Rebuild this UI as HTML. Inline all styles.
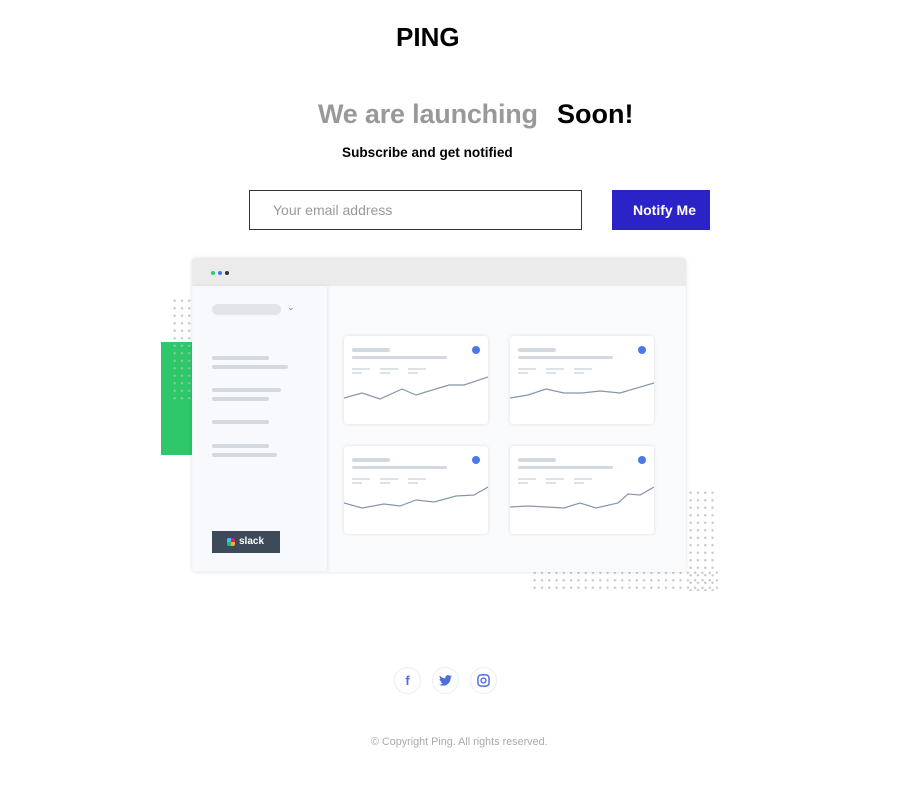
<!DOCTYPE html>
<html><head><style>
*{margin:0;padding:0;box-sizing:border-box}
body{width:902px;height:788px;background:#fff;font-family:"Liberation Sans",sans-serif;position:relative;overflow:hidden}
.a{position:absolute}
.dots{background-image:radial-gradient(circle,#c8c8c8 1px,transparent 1.4px);background-size:7.3px 7.5px}
.bar{position:absolute;height:4px;border-radius:2px;background:#d3d9e0}
.sb{position:absolute;height:2px;background:#dde2e8}
.card{position:absolute;width:144px;height:88px;background:#fff;border-radius:3px;box-shadow:0 0 3px rgba(0,0,0,.12)}
.chk{position:absolute;right:8px;top:10px;width:8px;height:8px;border-radius:50%;background:#4b79e8}
.soc{position:absolute;top:667px;width:27px;height:27px;border-radius:50%;border:1px solid #e8ecf5;color:#4b6fe0;font-size:13px;font-weight:bold;text-align:center;line-height:25px}
</style></head><body>
<div class="a" style="left:396px;top:22px;font-size:26px;font-weight:bold">PING</div>
<div class="a" style="left:318px;top:99px;font-size:27px;font-weight:bold;color:#999;letter-spacing:-0.2px">We are launching</div>
<div class="a" style="left:557px;top:99px;font-size:27px;font-weight:bold;color:#000">Soon!</div>
<div class="a" style="left:342px;top:145px;font-size:13.6px;font-weight:bold">Subscribe and get notified</div>
<div class="a" style="left:249px;top:190px;width:333px;height:40px;border:1px solid #333;"></div>
<div class="a" style="left:273px;top:202px;font-size:14px;color:#999">Your email address</div>
<div class="a" style="left:612px;top:190px;width:98px;height:40px;background:#2b22c8;color:#fff;font-size:14px;font-weight:bold;line-height:40px;padding-left:21px">Notify Me</div>

<div class="a dots" style="left:171px;top:297px;width:22px;height:106px"></div>
<div class="a" style="left:161px;top:342px;width:32px;height:113px;background:#2ec76a"></div>
<div class="a dots" style="left:171px;top:342px;width:22px;height:61px;opacity:.6"></div>
<div class="a dots" style="left:687px;top:489px;width:31px;height:102px"></div>
<div class="a dots" style="left:531px;top:569px;width:187px;height:22px"></div>

<div class="a" style="left:192px;top:258px;width:494px;height:314px;background:#f9fafc;border-radius:4px;box-shadow:0 0 4px rgba(0,0,0,.12)"></div>
<div class="a" style="left:192px;top:258px;width:494px;height:28px;background:#ebebeb;border-radius:4px 4px 0 0"></div>
<div class="a" style="left:211px;top:271px;width:4px;height:4px;border-radius:50%;background:#2ec76a"></div>
<div class="a" style="left:218px;top:271px;width:4px;height:4px;border-radius:50%;background:#4b79e8"></div>
<div class="a" style="left:225px;top:271px;width:4px;height:4px;border-radius:50%;background:#333"></div>
<div class="a" style="left:193px;top:286px;width:134px;height:285px;background:#f8f9fc;box-shadow:1px 0 3px rgba(0,0,0,.08)"></div>
<div class="a" style="left:212px;top:304px;width:69px;height:11px;border-radius:6px;background:#e1e4e8"></div>
<div class="a" style="left:287px;top:302px;font-size:9px;color:#4b79e8">⌄</div>
<div class="bar" style="left:212px;top:356px;width:57px"></div>
<div class="bar" style="left:212px;top:365px;width:76px"></div>
<div class="bar" style="left:212px;top:388px;width:69px"></div>
<div class="bar" style="left:212px;top:397px;width:57px"></div>
<div class="bar" style="left:212px;top:420px;width:57px"></div>
<div class="bar" style="left:212px;top:444px;width:57px"></div>
<div class="bar" style="left:212px;top:453px;width:65px"></div>
<div class="a" style="left:212px;top:531px;width:68px;height:22px;background:#3d4a5a;color:#fff;font-size:10px;font-weight:bold;line-height:22px;padding-left:27px">slack</div>
<div class="a" style="left:227px;top:538px;width:8px;height:8px;background:conic-gradient(#e01e5a 0 25%,#ecb22e 0 50%,#2eb67d 0 75%,#36c5f0 0);border-radius:2px"></div>

<div class="card" style="left:344px;top:336px"><div class="bar" style="left:8px;top:12px;width:38px"></div><div class="bar" style="left:8px;top:20px;width:95px;height:3px"></div><div class="chk"></div>
<div class="sb" style="left:8px;top:32px;width:18px"></div><div class="sb" style="left:36px;top:32px;width:18px"></div><div class="sb" style="left:64px;top:32px;width:18px"></div>
<div class="sb" style="left:8px;top:36px;width:10px"></div><div class="sb" style="left:36px;top:36px;width:10px"></div><div class="sb" style="left:64px;top:36px;width:10px"></div>
<svg class="a" style="left:0;top:40px" width="144" height="30"><polyline fill="none" stroke="#8796a8" stroke-width="1.2" points="0,22 18,17 36,23 58,13 72,19 105,9 120,9 144,1"/></svg></div>
<div class="card" style="left:510px;top:336px"><div class="bar" style="left:8px;top:12px;width:38px"></div><div class="bar" style="left:8px;top:20px;width:95px;height:3px"></div><div class="chk"></div>
<div class="sb" style="left:8px;top:32px;width:18px"></div><div class="sb" style="left:36px;top:32px;width:18px"></div><div class="sb" style="left:64px;top:32px;width:18px"></div>
<div class="sb" style="left:8px;top:36px;width:10px"></div><div class="sb" style="left:36px;top:36px;width:10px"></div><div class="sb" style="left:64px;top:36px;width:10px"></div>
<svg class="a" style="left:0;top:40px" width="144" height="30"><polyline fill="none" stroke="#8796a8" stroke-width="1.2" points="0,22 18,19 36,13 54,17 72,17 90,15 110,17 144,7"/></svg></div>
<div class="card" style="left:344px;top:446px"><div class="bar" style="left:8px;top:12px;width:38px"></div><div class="bar" style="left:8px;top:20px;width:95px;height:3px"></div><div class="chk"></div>
<div class="sb" style="left:8px;top:32px;width:18px"></div><div class="sb" style="left:36px;top:32px;width:18px"></div><div class="sb" style="left:64px;top:32px;width:18px"></div>
<div class="sb" style="left:8px;top:36px;width:10px"></div><div class="sb" style="left:36px;top:36px;width:10px"></div><div class="sb" style="left:64px;top:36px;width:10px"></div>
<svg class="a" style="left:0;top:40px" width="144" height="30"><polyline fill="none" stroke="#8796a8" stroke-width="1.2" points="0,17 18,22 40,18 56,20 72,14 90,16 112,10 130,9 144,1"/></svg></div>
<div class="card" style="left:510px;top:446px"><div class="bar" style="left:8px;top:12px;width:38px"></div><div class="bar" style="left:8px;top:20px;width:95px;height:3px"></div><div class="chk"></div>
<div class="sb" style="left:8px;top:32px;width:18px"></div><div class="sb" style="left:36px;top:32px;width:18px"></div><div class="sb" style="left:64px;top:32px;width:18px"></div>
<div class="sb" style="left:8px;top:36px;width:10px"></div><div class="sb" style="left:36px;top:36px;width:10px"></div><div class="sb" style="left:64px;top:36px;width:10px"></div>
<svg class="a" style="left:0;top:40px" width="144" height="30"><polyline fill="none" stroke="#8796a8" stroke-width="1.2" points="0,21 18,20 54,22 70,17 86,22 108,17 118,8 130,9 144,1"/></svg></div>

<div class="soc" style="left:394px">f</div>
<div class="soc" style="left:432px">
<svg width="13" height="11" viewBox="0 0 24 20" style="margin-top:7px"><path fill="#4b6fe0" d="M24 2.4a10 10 0 0 1-2.8.8A5 5 0 0 0 23.3.4a10 10 0 0 1-3.1 1.2A4.9 4.9 0 0 0 11.8 6 14 14 0 0 1 1.7.9a4.9 4.9 0 0 0 1.5 6.6A4.9 4.9 0 0 1 1 6.9 4.9 4.9 0 0 0 4.9 11.8a5 5 0 0 1-2.2.1 4.9 4.9 0 0 0 4.6 3.4A9.9 9.9 0 0 1 0 17.3 14 14 0 0 0 7.5 19.5c9 0 14-7.5 14-14v-.6A10 10 0 0 0 24 2.4z"/></svg></div>
<div class="soc" style="left:470px">
<svg width="13" height="13" viewBox="0 0 14 14" style="margin-top:6px"><rect x="1" y="1" width="12" height="12" rx="3.5" fill="none" stroke="#4b6fe0" stroke-width="1.6"/><circle cx="7" cy="7" r="2.6" fill="none" stroke="#4b6fe0" stroke-width="1.5"/></svg></div>
<div class="a" style="left:371px;top:736px;font-size:10.8px;color:#aaa">© Copyright Ping. All rights reserved.</div>
</body></html>
